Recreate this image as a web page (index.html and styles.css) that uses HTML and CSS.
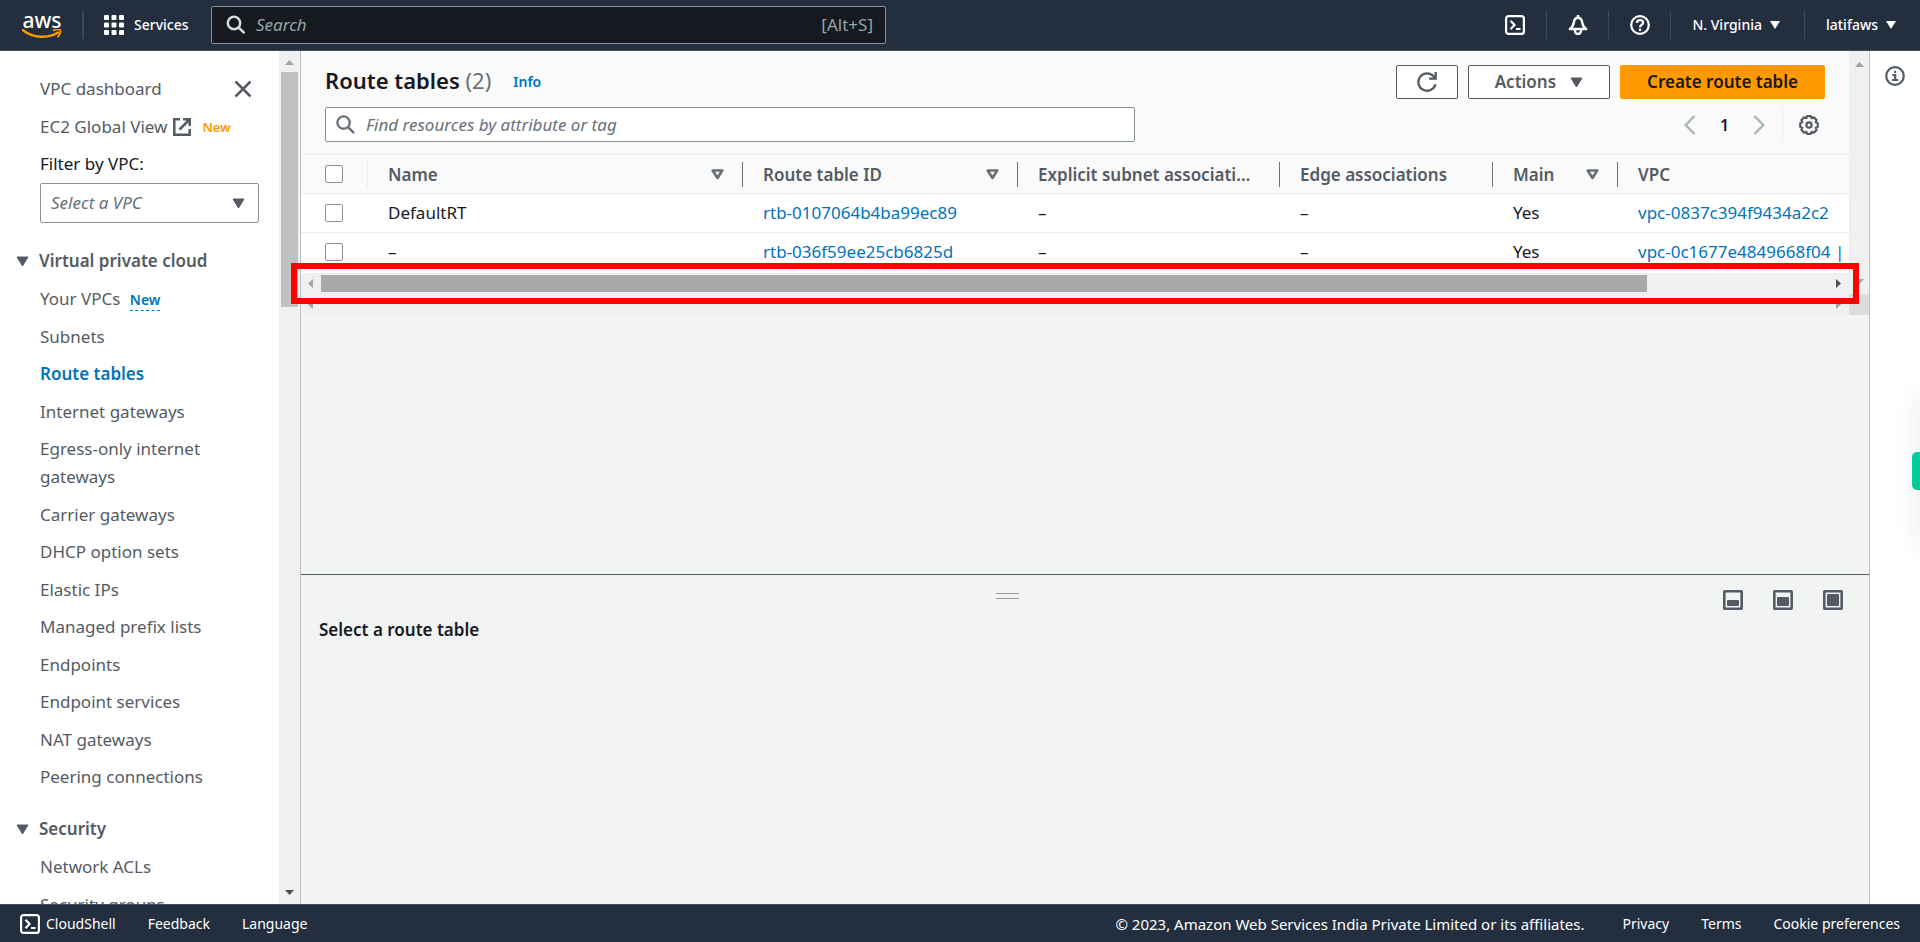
FILE: index.html
```html
<!DOCTYPE html>
<html lang="en">
<head>
<meta charset="utf-8">
<title>Route tables | VPC Console</title>
<link rel="stylesheet" href="styles.css">
</head>
<body>
<header class="topnav">
  <a class="logo" href="#" aria-label="AWS">
    <span class="logo-text">aws</span>
    <svg class="logo-smile" width="40" height="10" viewBox="0 0 40 10"><path d="M1 1.200C11 9 26 10 36 3.600" fill="none" stroke="#f90" stroke-width="2.400" stroke-linecap="round"/><path d="M31.500 1.400C34 .3 37.600 .2 38.300 1.100C39 2.300 37.800 5.800 36 7.600" fill="none" stroke="#f90" stroke-width="1.700" stroke-linecap="round"/></svg>
  </a>
  <span class="divider"></span>
  <button class="nav-button services" type="button">
    <svg width="20" height="20" viewBox="0 0 20 20" fill="#fff"><rect width="5" height="5" rx="1"/><rect x="7.500" width="5" height="5" rx="1"/><rect x="15" width="5" height="5" rx="1"/><rect y="7.500" width="5" height="5" rx="1"/><rect x="7.500" y="7.500" width="5" height="5" rx="1"/><rect x="15" y="7.500" width="5" height="5" rx="1"/><rect y="15" width="5" height="5" rx="1"/><rect x="7.500" y="15" width="5" height="5" rx="1"/><rect x="15" y="15" width="5" height="5" rx="1"/></svg>
    Services
  </button>
  <label class="nav-search">
    <svg width="20" height="20" viewBox="0 0 20 20" fill="none" stroke="#d5dbdb" stroke-width="2.500"><circle cx="8" cy="8" r="6.200"/><path d="M12.500 12.500l6 5.700"/></svg>
    <input type="text" placeholder="Search" aria-label="Search">
    <span class="shortcut">[Alt+S]</span>
  </label>
  <div class="nav-right">
    <button class="nav-button icon-cell" type="button" aria-label="CloudShell"><svg width="20" height="20" viewBox="0 0 20 20" fill="none" stroke="#fff" stroke-width="2.200"><rect x="1.100" y="1.100" width="17.800" height="17.800" rx="2.500"/><path d="M5.500 5.800l4 4.200-4 4.200M11 14h4.500"/></svg></button>
    <button class="nav-button icon-cell" type="button" aria-label="Notifications"><svg width="20" height="20" viewBox="0 0 20 20" fill="none" stroke="#fff" stroke-width="2.400"><path d="M10 0v3M1.800 14c3.200-2 3.600-4 4-6.500C6.200 4.700 7.500 2.800 10 2.800s3.800 1.900 4.200 4.700c.4 2.500.8 4.500 4 6.500z" stroke-linejoin="round"/><path d="M7 14.500v1.500a3 2.900 0 0 0 6 0v-1.500"/></svg></button>
    <button class="nav-button icon-cell" type="button" aria-label="Help"><svg width="20" height="20" viewBox="0 0 20 20" fill="none" stroke="#fff" stroke-width="2.200"><circle cx="10" cy="10" r="8.800"/><path d="M6.900 8C6.900 6 8.200 5.200 10 5.200s3.100.9 3.100 2.500c0 2-3.100 2.300-3.100 4.500M10 13.500v2.400"/></svg></button>
    <button class="nav-button text-cell" type="button">N. Virginia <svg width="10" height="8" viewBox="0 0 10 8"><path d="M0 0h10L5 8z" fill="#fff"/></svg></button>
    <button class="nav-button text-cell" type="button">latifaws <svg width="10" height="8" viewBox="0 0 10 8"><path d="M0 0h10L5 8z" fill="#fff"/></svg></button>
  </div>
</header>

<div class="workspace">
  <nav class="sidebar">
    <div class="side-content">
      <div class="side-top">
        <a href="#">VPC dashboard</a>
        <button class="close" type="button" aria-label="Close"><svg width="18" height="18" viewBox="0 0 18 18" fill="none" stroke="#545b64" stroke-width="2.500"><path d="M1.500 1.500l15 15M16.500 1.500l-15 15"/></svg></button>
      </div>
      <div class="side-global"><a href="#">EC2 Global View</a> <svg width="18" height="18" viewBox="0 0 18 18" fill="none" stroke="#545b64" stroke-width="2.500"><path d="M7 1.300H1.300v15.400h15.400V11M10 1.300h6.700V8M16.500 1.500L6.500 11.500"/></svg> <span class="tag-orange">New</span></div>
      <label class="filter-label" for="vpc-filter">Filter by VPC:</label>
      <div class="select-wrap">
        <select id="vpc-filter"><option>Select a VPC</option></select>
        <svg class="caret" width="13" height="11" viewBox="0 0 13 11"><path d="M1 1h11L6.500 10z" fill="#545b64" stroke="#545b64" stroke-linejoin="round"/></svg>
      </div>
      <button class="group" type="button"><svg width="13" height="11" viewBox="0 0 13 11"><path d="M1 1h11L6.500 10z" fill="#545b64" stroke="#545b64" stroke-linejoin="round"/></svg>Virtual private cloud</button>
      <ul>
        <li><a href="#">Your VPCs</a> <span class="tag-blue">New</span></li>
        <li><a href="#">Subnets</a></li>
        <li><a class="current" href="#">Route tables</a></li>
        <li><a href="#">Internet gateways</a></li>
        <li><a href="#">Egress-only internet<br>gateways</a></li>
        <li><a href="#">Carrier gateways</a></li>
        <li><a href="#">DHCP option sets</a></li>
        <li><a href="#">Elastic IPs</a></li>
        <li><a href="#">Managed prefix lists</a></li>
        <li><a href="#">Endpoints</a></li>
        <li><a href="#">Endpoint services</a></li>
        <li><a href="#">NAT gateways</a></li>
        <li><a href="#">Peering connections</a></li>
      </ul>
      <button class="group" type="button"><svg width="13" height="11" viewBox="0 0 13 11"><path d="M1 1h11L6.500 10z" fill="#545b64" stroke="#545b64" stroke-linejoin="round"/></svg>Security</button>
      <ul>
        <li><a href="#">Network ACLs</a></li>
        <li><a href="#">Security groups</a></li>
      </ul>
    </div>
    <div class="vbar">
      <svg width="9" height="5" viewBox="0 0 9 5"><path d="M0 5h9L4.500 0z" fill="#a3a3a3"/></svg>
      <span class="vthumb"></span>
      <svg class="vdown" width="9" height="5" viewBox="0 0 9 5"><path d="M0 0h9L4.500 5z" fill="#505050"/></svg>
    </div>
  </nav>

  <main>
    <section class="list">
      <div class="list-body">
        <div class="list-head">
          <div class="head-row">
            <h1>Route tables <span class="count">(2)</span></h1>
            <a class="info" href="#">Info</a>
            <div class="actions">
              <button class="btn refresh" type="button" aria-label="Refresh"><svg width="20" height="20" viewBox="0 0 20 20" fill="none" stroke="#545b64" stroke-width="2.300"><path d="M18.500 12.200A8.700 8.700 0 1 1 16.800 4.500L18 6"/><path d="M18.700 0v6.700H12"/></svg></button>
              <button class="btn" type="button">Actions <svg width="13" height="11" viewBox="0 0 13 11"><path d="M1 1h11L6.500 10z" fill="#545b64" stroke="#545b64" stroke-linejoin="round"/></svg></button>
              <button class="btn primary" type="button">Create route table</button>
            </div>
          </div>
          <div class="filter-row">
            <label class="find">
              <svg width="19" height="19" viewBox="0 0 20 20" fill="none" stroke="#687078" stroke-width="2.500"><circle cx="8" cy="8" r="6.500"/><path d="M12.500 12.500l6.500 6.500"/></svg>
              <input type="text" placeholder="Find resources by attribute or tag" aria-label="Find resources by attribute or tag">
            </label>
            <div class="pager">
              <button type="button" aria-label="Previous page"><svg width="12" height="20" viewBox="0 0 12 20" fill="none" stroke="#aab7b8" stroke-width="2.500"><path d="M10.500 1L1.700 10l8.800 9"/></svg></button>
              <span class="page">1</span>
              <button type="button" aria-label="Next page"><svg width="12" height="20" viewBox="0 0 12 20" fill="none" stroke="#aab7b8" stroke-width="2.500"><path d="M1.500 1l8.800 9-8.800 9"/></svg></button>
              <button class="settings" type="button" aria-label="Preferences"><svg width="20" height="20" viewBox="0 0 20 20" fill="none" stroke="#545b64" stroke-width="2.200" stroke-linejoin="round"><path d="M8 1.200h4l.6 2 2.200-.9 2.800 2.800-.9 2.200 2 .7v4l-2 .7.9 2.200-2.800 2.800-2.200-.9-.6 2H8l-.6-2-2.200.9-2.800-2.800.9-2.200-2-.7V8l2-.7-.9-2.200 2.800-2.800 2.200.9z"/><circle cx="10" cy="10" r="2.600"/></svg></button>
            </div>
          </div>
        </div>
        <table>
          <colgroup><col class="c-check"><col class="c-name"><col class="c-id"><col class="c-sub"><col class="c-edge"><col class="c-main"><col></colgroup>
          <thead>
            <tr>
              <th class="light"><input type="checkbox" aria-label="Select all"></th>
              <th><div class="th">Name <svg width="13" height="11" viewBox="0 0 13 11"><path d="M1.700 1.500h9.600L6.500 9z" fill="none" stroke="#687078" stroke-width="2.600" stroke-linejoin="round"/></svg></div></th>
              <th><div class="th">Route table ID <svg width="13" height="11" viewBox="0 0 13 11"><path d="M1.700 1.500h9.600L6.500 9z" fill="none" stroke="#687078" stroke-width="2.600" stroke-linejoin="round"/></svg></div></th>
              <th><div class="th"><span class="clip">Explicit subnet associations</span></div></th>
              <th><div class="th">Edge associations</div></th>
              <th><div class="th">Main <svg width="13" height="11" viewBox="0 0 13 11"><path d="M1.700 1.500h9.600L6.500 9z" fill="none" stroke="#687078" stroke-width="2.600" stroke-linejoin="round"/></svg></div></th>
              <th class="last"><div class="th">VPC</div></th>
            </tr>
          </thead>
          <tbody>
            <tr><td><input type="checkbox" aria-label="Select DefaultRT"></td><td>DefaultRT</td><td><a href="#">rtb-0107064b4ba99ec89</a></td><td>–</td><td>–</td><td>Yes</td><td><a href="#">vpc-0837c394f9434a2c2</a></td></tr>
            <tr><td><input type="checkbox" aria-label="Select route table"></td><td>–</td><td><a href="#">rtb-036f59ee25cb6825d</a></td><td>–</td><td>–</td><td>Yes</td><td><a href="#">vpc-0c1677e4849668f04 |</a></td></tr>
          </tbody>
        </table>
        <div class="hbar">
          <svg width="5" height="9" viewBox="0 0 5 9"><path d="M5 0v9L0 4.500z" fill="#a3a3a3"/></svg>
          <span class="htrack"><span class="hthumb"></span></span>
          <svg width="5" height="9" viewBox="0 0 5 9"><path d="M0 0v9l5-4.500z" fill="#505050"/></svg>
        </div>
        <div class="hbar2">
          <svg width="5" height="9" viewBox="0 0 5 9"><path d="M5 0v9L0 4.500z" fill="#a3a3a3"/></svg>
          <svg width="5" height="9" viewBox="0 0 5 9"><path d="M0 0v9l5-4.500z" fill="#a3a3a3"/></svg>
        </div>
      </div>
      <div class="vbar list-vbar">
        <svg width="9" height="5" viewBox="0 0 9 5"><path d="M0 5h9L4.500 0z" fill="#a3a3a3"/></svg>
        <svg class="vdown" width="9" height="5" viewBox="0 0 9 5"><path d="M0 0h9L4.500 5z" fill="#a3a3a3"/></svg>
        <span class="corner"></span>
      </div>
      <div class="highlight"></div>
    </section>
    <section class="split">
      <svg class="handle" width="23" height="7" viewBox="0 0 23 7" fill="none" stroke="#999"><path d="M0 .5h23M0 5.500h23"/></svg>
      <div class="split-icons">
        <button type="button" aria-label="Small panel"><svg width="20" height="20" viewBox="0 0 20 20"><rect x="1.300" y="1.300" width="17.400" height="17.400" rx=".5" fill="none" stroke="#545b64" stroke-width="2.600"/><rect x="4" y="10" width="12" height="6" rx="1" fill="#545b64"/></svg></button>
        <button type="button" aria-label="Medium panel"><svg width="20" height="20" viewBox="0 0 20 20"><rect x="1.300" y="1.300" width="17.400" height="17.400" rx=".5" fill="none" stroke="#545b64" stroke-width="2.600"/><rect x="4" y="7" width="12" height="9" rx="1" fill="#545b64"/></svg></button>
        <button type="button" aria-label="Large panel"><svg width="20" height="20" viewBox="0 0 20 20"><rect x="1.300" y="1.300" width="17.400" height="17.400" rx=".5" fill="none" stroke="#545b64" stroke-width="2.600"/><rect x="4" y="4" width="12" height="12" rx="1" fill="#545b64"/></svg></button>
      </div>
      <h2>Select a route table</h2>
    </section>
  </main>

  <aside class="tools">
    <button type="button" aria-label="Info panel"><svg width="20" height="20" viewBox="0 0 20 20" fill="none" stroke="#545b64" stroke-width="2.200"><circle cx="10" cy="10" r="8.800"/><path d="M7.500 9h2.700v5M7 14h6.200M10.100 4.700v2.300"/></svg></button>
  </aside>
</div>
<div class="side-tab"></div>

<footer>
  <a class="shell" href="#"><svg width="20" height="20" viewBox="0 0 20 20" fill="none" stroke="#fff" stroke-width="2.200"><rect x="1.100" y="1.100" width="17.800" height="17.800" rx="2.500"/><path d="M5.500 5.800l4 4.200-4 4.200M11 14h4.500"/></svg>CloudShell</a>
  <a href="#">Feedback</a>
  <a href="#">Language</a>
  <span class="copyright">© 2023, Amazon Web Services India Private Limited or its affiliates.</span>
  <a href="#">Privacy</a>
  <a href="#">Terms</a>
  <a href="#">Cookie preferences</a>
</footer>
</body>
</html>
```
FILE: styles.css
```css
* { box-sizing: border-box; }
body { margin: 0; height: 100vh; display: flex; flex-direction: column; overflow: hidden; font: 17px/28px "Noto Sans", "Open Sans", sans-serif; color: #16191f; background: #fff; }
a { color: inherit; text-decoration: none; }
button, input, select { font: inherit; color: inherit; }
button { border: 0; padding: 0; background: none; }
svg { display: block; flex: none; }
ul { list-style: none; margin: 0; padding: 0; }
h1, h2 { margin: 0; }

.topnav { height: 51px; flex: none; display: flex; align-items: center; background: #232f3e; border-bottom: 1px solid #414d5c; padding-left: 22px; color: #fff; font-size: 14px; font-weight: 500; }
.logo { width: 40px; display: flex; flex-direction: column; align-items: center; }
.logo-text { font: 500 21px/16px "Noto Sans", sans-serif; }
.logo-smile { margin-top: 1px; }
.divider { width: 2px; height: 28px; margin: 0 20px; background: #414750; }
.nav-button { display: flex; align-items: center; color: #fff; }
.services { gap: 10px; width: 107px; white-space: nowrap; }
.nav-search { width: 675px; height: 38px; display: flex; align-items: center; gap: 10px; padding: 0 12px 0 14px; background: #161920; border: 1px solid #879596; border-radius: 2px; font-size: 17px; font-weight: 400; }
.nav-search input, .find input { flex: 1; min-width: 0; border: 0; padding: 0; background: none; outline: 0; }
.nav-search input::placeholder { color: #95a5a6; font-style: italic; }
.shortcut { color: #95a5a6; }
.nav-right { margin-left: auto; display: flex; height: 28px; }
.nav-right .nav-button + .nav-button { border-left: 1px solid #414750; }
.icon-cell { width: 62px; justify-content: center; }
.text-cell { gap: 8px; padding: 0 24px 0 21px; white-space: nowrap; }

.workspace { flex: 1; min-height: 0; display: flex; }
.sidebar { width: 301px; flex: none; display: flex; border-right: 1px solid #bcc3c6; }
.side-content { flex: 1; min-width: 0; overflow: hidden; padding: 24px 20px 0 40px; color: #545b64; }
.side-top { display: flex; justify-content: space-between; padding-right: 7px; }
.side-global { display: flex; align-items: center; gap: 6px; margin-top: 10px; white-space: nowrap; }
.tag-orange { font-size: 13px; font-weight: 600; color: #f90; margin-left: 5px; }
.filter-label { display: block; margin-top: 9px; color: #16191f; }
.select-wrap { position: relative; margin-top: 5px; }
select { display: block; width: 100%; height: 40px; appearance: none; border: 1px solid #879596; border-radius: 2px; background: #fff; padding: 0 10px; font-style: italic; color: #687078; }
.caret { position: absolute; right: 14px; top: 15px; }
.group { display: flex; align-items: center; gap: 10px; margin: 24px 0 10px -24px; font-weight: 600; line-height: 28px; }
li { margin-top: 9px; }
li:nth-child(even) { margin-top: 10px; }
.current { font-weight: 600; color: #0073bb; }
.tag-blue { font-size: 14px; line-height: 20px; font-weight: 600; color: #0073bb; border-bottom: 1px dashed #0073bb; margin-left: 5px; display: inline-block; }
.vbar { width: 21px; flex: none; display: flex; flex-direction: column; align-items: center; background: #f0f0f0; padding: 9px 0; }
.vthumb { width: 17px; height: 235px; margin-top: 7px; background: #c1c1c1; }
.vdown { margin-top: auto; }

main { flex: 1; min-width: 0; display: flex; flex-direction: column; background: #f2f3f3; border-right: 1px solid #bcc3c6; }
.list { position: relative; flex: 1; display: flex; align-items: flex-start; }
.list-body { flex: 1; min-width: 0; }
.list-head { background: #fafafa; padding: 14px 24px 12px; }
.head-row { display: flex; align-items: center; height: 34px; }
h1 { font-size: 22px; line-height: 30px; font-weight: 600; padding-bottom: 4px; }
.count { font-weight: 400; color: #687078; }
.info { margin-left: 22px; font-size: 14px; font-weight: 600; color: #0073bb; }
.actions { margin-left: auto; display: flex; gap: 10px; }
.btn { height: 34px; display: flex; align-items: center; justify-content: center; gap: 14px; padding: 0 26px; background: #fff; border: 1px solid #545b64; border-radius: 2px; color: #545b64; font-weight: 600; }
.refresh { width: 62px; }
.primary { background: #f90; border-color: #f90; color: #16191f; }
.filter-row { display: flex; align-items: center; justify-content: space-between; margin-top: 8px; }
.find { width: 810px; height: 35px; display: flex; align-items: center; gap: 11px; padding: 0 10px; background: #fff; border: 1px solid #879596; border-radius: 2px; }
.find input::placeholder { color: #687078; font-style: italic; }
.pager { display: flex; align-items: center; height: 35px; padding-right: 6px; }
.page { width: 57px; text-align: center; font-weight: 600; font-size: 16px; }
.settings { height: 35px; margin-left: 17px; padding-left: 16px; border-left: 1px solid #eaeded; }

table { width: 100%; table-layout: fixed; border-collapse: separate; border-spacing: 0; background: #fff; }
.c-check { width: 67px; }
.c-name { width: 375px; }
.c-id { width: 275px; }
.c-sub { width: 262px; }
.c-edge { width: 213px; }
.c-main { width: 125px; }
th, td { height: 39px; padding: 0 0 0 20px; text-align: left; white-space: nowrap; border-top: 1px solid #eaeded; }
th { background: #fafafa; color: #545b64; font-weight: 600; }
th:first-child, td:first-child { padding-left: 24px; }
.th { height: 25px; line-height: 25px; display: flex; align-items: center; justify-content: space-between; padding-right: 18px; border-right: 1px solid #687078; }
.last .th { border: 0; }
.light { background: linear-gradient(#eaeded, #eaeded) right center / 1px 25px no-repeat #fafafa; }
.clip { width: 218px; overflow: hidden; text-overflow: ellipsis; }
td a { color: #0073bb; }
td input, th input { appearance: none; display: block; width: 18px; height: 18px; margin: 0; background: #fff; border: 1px solid #879596; border-radius: 2px; }
.hbar { height: 26px; display: flex; align-items: center; gap: 8px; padding: 0 8px 4px 7px; background: #f0f0f0; border-top: 2px solid #fff; }
.htrack { flex: 1; }
.hthumb { display: block; width: 88%; height: 17px; background: #a8a8a8; }
.hbar2 { height: 17px; display: flex; justify-content: space-between; padding: 3px 8px 0 7px; background: #f0f0f0; }
.list-vbar { width: 20px; height: 264px; padding: 11px 0 0; }
.list-vbar .vdown { margin-bottom: 10px; }
.corner { width: 100%; height: 21px; background: #dcdcdc; }
.highlight { position: absolute; left: -10px; right: 10px; top: 212px; height: 41px; border: 6px solid #f00; }
.split { position: relative; height: 330px; flex: none; border-top: 1px solid #545b64; padding: 41px 18px 0; }
.handle { position: absolute; left: calc(50% - 89px); top: 18px; }
.split-icons { position: absolute; right: 26px; top: 15px; display: flex; gap: 30px; }
h2 { font-size: 17px; line-height: 28px; font-weight: 600; }
.tools { width: 50px; flex: none; padding: 15px 0 0 15px; }
.side-tab { position: absolute; right: 0; top: 452px; width: 8px; height: 38px; background: #00cc99; border-radius: 5px 0 0 5px; }
.side-tab::before { content: ""; position: absolute; z-index: -1; right: -10px; top: -60px; width: 10px; height: 158px; box-shadow: 0 0 24px rgba(0, 0, 0, .12); }

footer { height: 38px; flex: none; display: flex; align-items: center; gap: 32px; padding: 0 20px; background: #232f3e; border-top: 1px solid #414d5c; color: #fff; font-size: 14px; }
.shell { display: flex; align-items: center; gap: 6px; }
.copyright { margin-left: auto; padding-right: 6px; font-size: 15px; }
```
